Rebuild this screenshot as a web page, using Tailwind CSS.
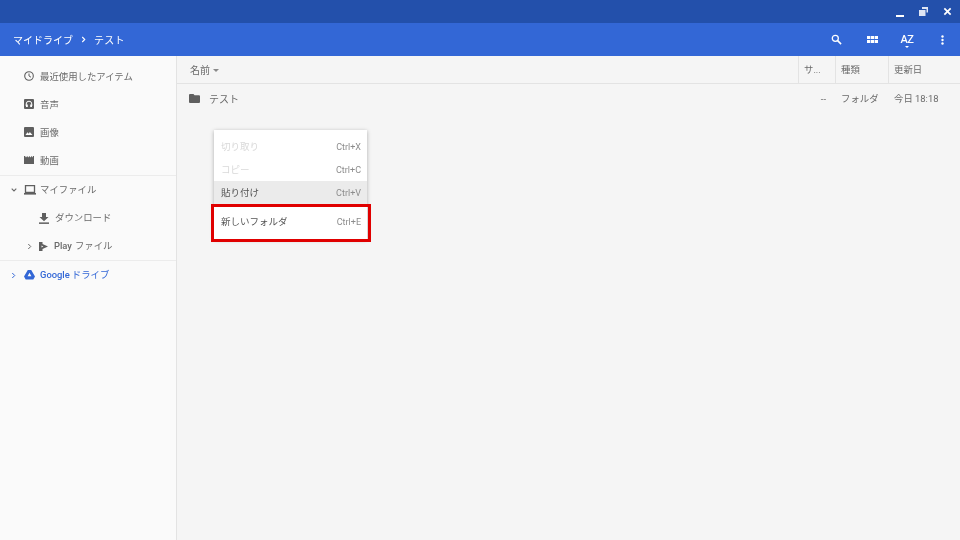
<!DOCTYPE html>
<html lang="ja"><head><meta charset="utf-8"><script src="https://cdn.jsdelivr.net/npm/@tailwindcss/browser@4"></script></head>
<body class="m-0">
<div class="relative w-[960px] h-[540px] overflow-hidden flex flex-col bg-[#f5f5f5] text-[9.4px] text-[#6a6a6a] blur-[0.5px] font-['Roboto','Noto_Sans_CJK_JP',sans-serif]">
  <div class="h-[23px] bg-[#2350ab] flex items-center justify-end shrink-0">
    <svg class="w-[8px] h-[10px] mr-[15px] mt-[3px]" viewBox="0 0 8 10"><rect x="0" y="7" width="8" height="2" fill="#fff"/></svg>
    <svg class="w-[9px] h-[9px] mr-[15px]" viewBox="0 0 9 9"><path d="M3 0h6v5.500H7.500V2H3zM0 3h6.500v6H0z" fill="#dfe5f3"/></svg>
    <svg class="w-[9px] h-[9px] mr-[8px]" viewBox="0 0 10 10"><path d="M1.500 1.500l7 7M8.500 1.500l-7 7" stroke="#fff" stroke-width="1.900"/></svg>
  </div>
  <div class="h-[33px] bg-[#3367d6] flex items-center shrink-0 text-white text-[10px] pl-[13px]">
    <span class="pt-[2px]">マイドライブ</span>
    <svg class="w-[5px] h-[7px] ml-[8px] mr-[8px]" viewBox="0 0 6 8"><path d="M1.500 1l3 3-3 3" fill="none" stroke="#fff" stroke-width="1.300"/></svg>
    <span class="pt-[2px] tracking-[0.3px]">テスト</span>
    <div class="ml-auto flex items-center">
      <svg class="w-[11px] h-[11px] mr-[25px]" viewBox="0 0 12 12"><circle cx="4.700" cy="4.700" r="3.300" fill="none" stroke="#fff" stroke-width="1.400"/><path d="M7 7l4 4" stroke="#fff" stroke-width="1.700"/></svg>
      <svg class="w-[11px] h-[7px] mr-[21px]" viewBox="0 0 11 7"><path d="M0 0h3.300v3H0zM3.900 0h3.200v3H3.900zM7.700 0H11v3H7.700zM0 4h3.300v3H0zM3.900 4h3.200v3H3.900zM7.700 4H11v3H7.700z" fill="#fff"/></svg>
      <div class="flex flex-col items-center w-[16px] mr-[26px] pt-[2px]">
        <span class="text-[11px] font-medium leading-[11px] tracking-[-0.5px]">AZ</span>
        <svg class="w-[4px] h-[2px] mt-[1px]" viewBox="0 0 4 2"><path d="M0 0h4L2 2z" fill="#fff"/></svg>
      </div>
      <svg class="w-[3px] h-[10px] mr-[16px]" viewBox="0 0 3 10"><circle cx="1.500" cy="1.500" r="1.200" fill="#fff"/><circle cx="1.500" cy="5" r="1.200" fill="#fff"/><circle cx="1.500" cy="8.500" r="1.200" fill="#fff"/></svg>
    </div>
  </div>
  <div class="flex flex-1 min-h-0">
    <aside class="w-[177px] shrink-0 bg-[#fafafa] border-r border-[#e3e3e3] pt-[6px]">
      <div class="h-[28px] flex items-center pl-[24px] gap-[6px]">
        <svg class="w-[10px] h-[10px]" viewBox="0 0 10 10"><circle cx="5" cy="5" r="4.300" fill="none" stroke="#5f5f5f" stroke-width="1.100"/><path d="M5 2.500V5l2 1.200" fill="none" stroke="#5f5f5f"/></svg><span class="pt-[2px]">最近使用したアイテム</span>
      </div>
      <div class="h-[28px] flex items-center pl-[24px] gap-[6px]">
        <svg class="w-[10px] h-[10px]" viewBox="0 0 10 10"><rect width="10" height="10" rx="1" fill="#5f5f5f"/><path d="M2.200 7V5a2.800 2.800 0 0 1 5.600 0v2" fill="none" stroke="#fff"/><rect x="2" y="5.500" width="1.800" height="2.500" fill="#fff"/><rect x="6.200" y="5.500" width="1.800" height="2.500" fill="#fff"/></svg><span class="pt-[2px]">音声</span>
      </div>
      <div class="h-[28px] flex items-center pl-[24px] gap-[6px]">
        <svg class="w-[10px] h-[10px]" viewBox="0 0 10 10"><rect width="10" height="10" rx="1" fill="#5f5f5f"/><path d="M1.500 8l2-2.800 1.300 1.500L5.800 5l2.700 3z" fill="#fff"/></svg><span class="pt-[2px]">画像</span>
      </div>
      <div class="h-[28px] flex items-center pl-[24px] gap-[6px]">
        <svg class="w-[10px] h-[10px]" viewBox="0 0 10 10"><path d="M0 1h1l1 1.500L3.200 1 4.200 2.500 5.400 1l1 1.500L7.600 1l1 1.500L9 1h1v8H0z" fill="#5f5f5f"/></svg><span class="pt-[2px]">動画</span>
      </div>
      <div class="border-t border-[#ececec] mt-[1px]">
        <div class="h-[28px] flex items-center pl-[11px]">
          <svg class="w-[6px] h-[6px] mr-[7px]" viewBox="0 0 6 6"><path d="M.7 1.700L3 4l2.300-2.300" fill="none" stroke="#6a6a6a" stroke-width="1.100"/></svg>
          <svg class="w-[12px] h-[10px] mr-[4px]" viewBox="0 0 12 10"><path d="M1.500.5h9v7h-9z" fill="none" stroke="#5f5f5f" stroke-width="1.300"/><rect y="8" width="12" height="1.600" fill="#5f5f5f"/></svg><span>マイファイル</span>
        </div>
        <div class="h-[28px] flex items-center pl-[39px] gap-[6px]">
          <svg class="w-[10px] h-[11px]" viewBox="0 0 10 11"><path d="M3 0h4v4h2.500L5 8.300.5 4H3z" fill="#5f5f5f"/><rect y="9.400" width="10" height="1.500" fill="#5f5f5f"/></svg><span>ダウンロード</span>
        </div>
        <div class="h-[28px] flex items-center pl-[27px]">
          <svg class="w-[5px] h-[7px] mr-[7px]" viewBox="0 0 6 8"><path d="M1.500 1l3 3-3 3" fill="none" stroke="#6a6a6a" stroke-width="1.200"/></svg>
          <svg class="w-[9px] h-[9px] mr-[6px]" viewBox="0 0 9 9"><path d="M0 0h3.500v2L9 4.500 3.500 7v2H0z" fill="#5f5f5f"/><path d="M2.500 3.400v2.200l1.800-1.100z" fill="#fafafa"/></svg><span class="font-medium">Play</span><span class="ml-[3px]">ファイル</span>
        </div>
      </div>
      <div class="border-t border-[#ececec]">
        <div class="h-[28px] flex items-center pl-[11px] text-[#3367d6]">
          <svg class="w-[5px] h-[7px] mr-[8px]" viewBox="0 0 6 8"><path d="M1.500 1l3 3-3 3" fill="none" stroke="#3367d6" stroke-width="1.200"/></svg>
          <svg class="w-[11px] h-[10px] mr-[5px]" viewBox="0 0 11 10"><path d="M3.800 0h3.400L11 6.500 9.300 9.500H1.700L0 6.500zM5.500 2.800L3.600 6.300h3.800z" fill="#3367d6" fill-rule="evenodd"/></svg><span class="font-medium">Google</span><span class="ml-[2px]">ドライブ</span>
        </div>
      </div>
    </aside>
    <main class="flex-1 min-w-0">
      <div class="h-[28px] flex items-center border-b border-[#e3e3e3]">
        <div class="flex-1 pl-[13px] flex items-center gap-[3px]"><span class="pt-[2px] text-[10px]">名前</span><svg class="w-[6px] h-[3px] mt-[1px]" viewBox="0 0 6 3"><path d="M0 0h6L3 3z" fill="#8a8a8a"/></svg></div>
        <div class="w-[37px] h-full border-l border-[#e3e3e3] pl-[5px] flex items-center"><span class="pt-[2px]">サ...</span></div>
        <div class="w-[53px] h-full border-l border-[#e3e3e3] pl-[5px] flex items-center"><span class="pt-[2px]">種類</span></div>
        <div class="w-[72px] h-full border-l border-[#e3e3e3] pl-[5px] flex items-center"><span class="pt-[2px]">更新日</span></div>
      </div>
      <div class="h-[28px] flex items-center">
        <div class="flex-1 pl-[12px] flex items-center gap-[9px]">
          <svg class="w-[11px] h-[9px]" viewBox="0 0 11 9"><path d="M1 0h3.500l1 1.300H10a1 1 0 0 1 1 1V8a1 1 0 0 1-1 1H1a1 1 0 0 1-1-1V1a1 1 0 0 1 1-1z" fill="#5f5f5f"/></svg><span class="pt-[2px] text-[10px]">テスト</span>
        </div>
        <div class="w-[37px] pr-[9px] pt-[2px] text-right"><span>--</span></div>
        <div class="w-[53px] pl-[6px] pt-[2px]"><span>フォルダ</span></div>
        <div class="w-[72px] pl-[6px] pt-[2px]"><span>今日 18:18</span></div>
      </div>
    </main>
  </div>
  <div class="absolute left-[214px] top-[130px] w-[153px] h-[109px] bg-white shadow-[0_1px_4px_rgba(0,0,0,0.3)] pt-[5px] text-[9.500px]">
    <div class="h-[23px] pl-[7px] pr-[6px] flex items-center justify-between"><span class="text-[#d9d9d9] pt-[2px]">切り取り</span><span class="text-[#8c8c8c] text-[9px] pt-[2px]">Ctrl+X</span></div>
    <div class="h-[23px] pl-[7px] pr-[6px] flex items-center justify-between"><span class="text-[#d9d9d9] pt-[2px]">コピー</span><span class="text-[#8c8c8c] text-[9px] pt-[2px]">Ctrl+C</span></div>
    <div class="h-[23px] pl-[7px] pr-[6px] flex items-center justify-between bg-[#ebebeb]"><span class="text-[#555] pt-[2px]">貼り付け</span><span class="text-[#8c8c8c] text-[9px] pt-[2px]">Ctrl+V</span></div>
    <div class="mt-[6px] h-[23px] pl-[7px] pr-[6px] flex items-center justify-between"><span class="text-[#555] pt-[2px]">新しいフォルダ</span><span class="text-[#8c8c8c] text-[9px] pt-[2px]">Ctrl+E</span></div>
  </div>
  <div class="absolute left-[211px] top-[204px] w-[160px] h-[38px] border-[3px] border-[#e00000]"></div>
</div>
</body></html>
